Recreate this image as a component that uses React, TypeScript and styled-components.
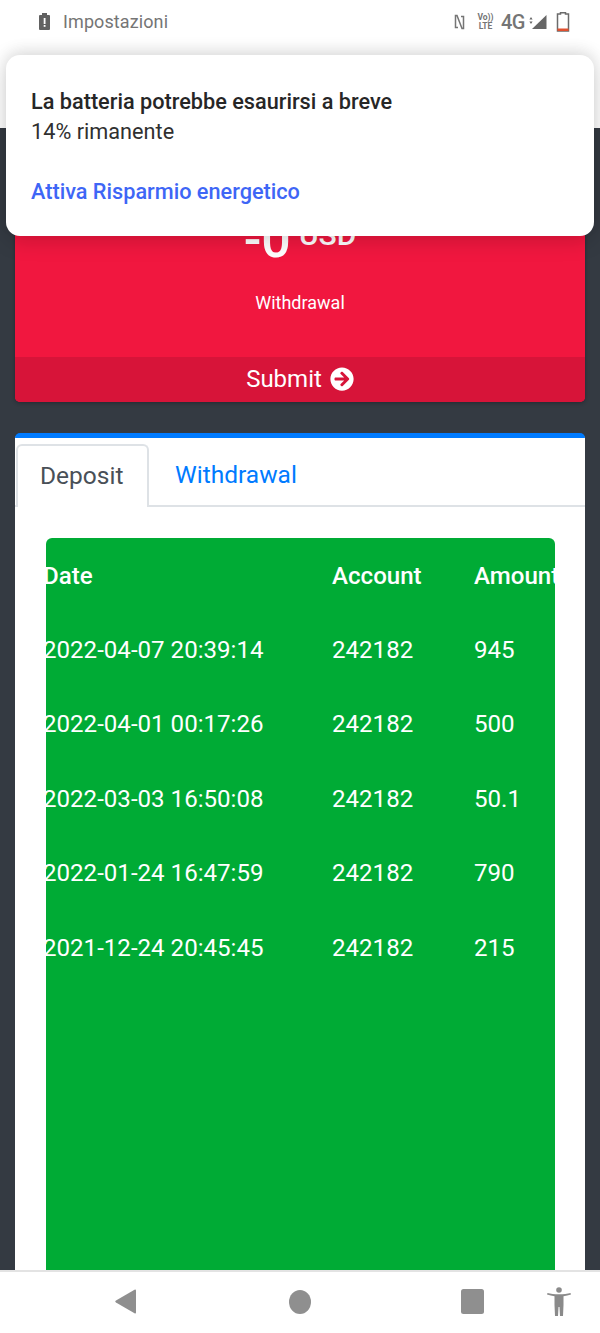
import React from "react";
import styled, { createGlobalStyle } from "styled-components";
import { FaArrowCircleRight } from "react-icons/fa";

const Global = createGlobalStyle`
  html, body { margin: 0; padding: 0; background: #343a42; }
  * { box-sizing: border-box; }
  body { font-family: Roboto, "Liberation Sans", sans-serif; }
`;

const Screen = styled.div`
  position: relative;
  width: 600px;
  height: 1333px;
  display: flex;
  flex-direction: column;
  overflow: hidden;
  background: #343a42;
`;

const Header = styled.header`
  flex: 0 0 128px;
  background: #fff;
`;

const StatusBar = styled.div`
  height: 44px;
  padding: 0 30px 0 39px;
  display: flex;
  align-items: center;
  justify-content: space-between;
  color: #757575;
`;

const StatusLeft = styled.div`
  display: flex;
  align-items: center;
  gap: 13px;
  padding-bottom: 1px;
  font-size: 18px;
  letter-spacing: 0.1px;
`;

const StatusRight = styled.div`
  display: flex;
  align-items: center;
`;

const VoLte = styled.span`
  display: flex;
  flex-direction: column;
  align-items: center;
  margin-left: 12px;
  font-size: 8.5px;
  line-height: 9px;
  font-weight: 700;
  width: 17px;
`;

const FourG = styled.span`
  margin-left: 7px;
  font-size: 20px;
  font-weight: 500;
  letter-spacing: -0.5px;
`;

const Icon = styled.svg<{ $ml?: number }>`
  display: block;
  flex: none;
  margin-left: ${(p) => p.$ml ?? 0}px;
`;

const Notice = styled.section`
  position: absolute;
  left: 6px;
  top: 55px;
  width: 588px;
  height: 181px;
  padding: 32px 25px 0;
  background: #fff;
  border-radius: 14px;
  box-shadow: 0 4px 22px rgba(0, 0, 0, 0.18), 0 -6px 14px rgba(0, 0, 0, 0.06);
`;

const NoticeTitle = styled.div`
  font-size: 21.7px;
  line-height: 30px;
  font-weight: 500;
  color: #262626;
`;

const NoticeText = styled.div`
  font-size: 21.7px;
  line-height: 30px;
  color: #303030;
`;

const NoticeLink = styled.div`
  margin-top: 30px;
  font-size: 21.7px;
  line-height: 30px;
  font-weight: 500;
  color: #3e66f6;
`;

const Main = styled.main`
  flex: 1;
  min-height: 0;
  padding: 22px 15px 0;
  overflow: hidden;
`;

const RedCard = styled.div`
  height: 252px;
  display: flex;
  flex-direction: column;
  border-radius: 5px;
  overflow: hidden;
  background: #f1173f;
  color: #fff;
  box-shadow: 0 1px 4px rgba(0, 0, 0, 0.3);
`;

const RedBody = styled.div`
  flex: 1;
  display: flex;
  flex-direction: column;
  align-items: center;
  padding-top: 62px;
`;

const Amount = styled.div`
  display: flex;
  align-items: flex-start;
  gap: 8px;
  height: 56px;
`;

const AmountValue = styled.span`
  font-size: 52px;
  line-height: 56px;
  font-weight: 500;
`;

const AmountUnit = styled.span`
  margin-top: 7px;
  font-size: 30px;
  line-height: 32px;
  font-weight: 500;
`;

const RedLabel = styled.div`
  margin-top: 23px;
  font-size: 18px;
  line-height: 24px;
`;

const SubmitBar = styled.div`
  flex: 0 0 45px;
  display: flex;
  align-items: center;
  justify-content: center;
  gap: 8px;
  padding-bottom: 1px;
  background: #d71439;
  font-size: 24px;
`;

const TableCard = styled.div`
  margin-top: 31px;
  height: 900px;
  background: #fff;
  border-top: 5px solid #007bff;
  border-radius: 5px 5px 0 0;
  padding-top: 6px;
`;

const Tabs = styled.nav`
  display: flex;
  height: 63px;
  border-bottom: 2px solid #dee2e6;
`;

const ActiveTab = styled.div`
  width: 133px;
  height: 63px;
  margin-left: 1px;
  padding: 0 0 3px 22px;
  display: flex;
  align-items: center;
  background: #fff;
  border: 2px solid #dee2e6;
  border-bottom: none;
  border-radius: 6px 6px 0 0;
  color: #495057;
  font-size: 24.5px;
`;

const Tab = styled.div`
  margin-left: 26px;
  display: flex;
  align-items: center;
  color: #007bff;
  font-size: 24.5px;
`;

const TablePane = styled.div`
  margin: 31px 30px 0 31px;
  height: 800px;
  padding-top: 0.5px;
  border-radius: 6px 6px 0 0;
  background: #00ab35;
  color: #fff;
  overflow: hidden;
`;

const Row = styled.div`
  display: grid;
  grid-template-columns: 289px 142px 120px;
  height: 74.4px;
  margin-left: -3px;
  align-items: center;
  font-size: 24.1px;
  white-space: nowrap;
  &:first-child { font-weight: 500; }
`;

const BottomNav = styled.footer`
  flex: 0 0 63px;
  padding: 0 0 2px 115px;
  display: flex;
  align-items: center;
  background: #fff;
  border-top: 2px solid #e3e3e3;
  position: relative;
`;

const rows = [
  ["2022-04-07 20:39:14", "242182", "945"],
  ["2022-04-01 00:17:26", "242182", "500"],
  ["2022-03-03 16:50:08", "242182", "50.1"],
  ["2022-01-24 16:47:59", "242182", "790"],
  ["2021-12-24 20:45:45", "242182", "215"],
];

export default function App() {
  return (
    <Screen>
      <Global />
      <Header>
        <StatusBar>
          <StatusLeft>
            <Icon width="11" height="17" viewBox="0 0 11 17">
              <path d="M3 0h5v2h2a1 1 0 0 1 1 1v13a1 1 0 0 1-1 1H1a1 1 0 0 1-1-1V3a1 1 0 0 1 1-1h2z" fill="#616161" />
              <rect x="4.7" y="5" width="1.8" height="6" fill="#fff" />
              <rect x="4.7" y="12" width="1.8" height="1.8" fill="#fff" />
            </Icon>
            Impostazioni
          </StatusLeft>
          <StatusRight>
            <Icon width="11" height="16" viewBox="0 0 11 16">
              <path d="M4 13.500H1.500V1.500H3L8 14.500H9.500V2.500H7" fill="none" stroke="#757575" strokeWidth="1.500" />
            </Icon>
            <VoLte>
              <span>Vo))</span>
              <span>LTE</span>
            </VoLte>
            <FourG>4G</FourG>
            <Icon $ml={4} width="18" height="16" viewBox="0 0 18 16">
              <path d="M17.500 1v14H3z" fill="#666" />
              <path d="M2 3l1.600 2.400H.4zM2 10L.4 7.600h3.200z" fill="#666" />
            </Icon>
            <Icon $ml={9} width="14" height="20" viewBox="0 0 14 20">
              <path d="M4.500 2V.8h5V2h3v17h-11V2z" fill="#fff" stroke="#6b6b6b" strokeWidth="1.500" />
              <rect x="1.500" y="16.500" width="11" height="2.500" fill="#e0502f" />
            </Icon>
          </StatusRight>
        </StatusBar>
      </Header>
      <Main>
        <RedCard>
          <RedBody>
            <Amount>
              <AmountValue>-0</AmountValue>
              <AmountUnit>USD</AmountUnit>
            </Amount>
            <RedLabel>Withdrawal</RedLabel>
          </RedBody>
          <SubmitBar>
            Submit
            <FaArrowCircleRight size={24} />
          </SubmitBar>
        </RedCard>
        <TableCard>
          <Tabs>
            <ActiveTab>Deposit</ActiveTab>
            <Tab>Withdrawal</Tab>
          </Tabs>
          <TablePane>
            <Row>
              <span>Date</span>
              <span>Account</span>
              <span>Amount</span>
            </Row>
            {rows.map((r) => (
              <Row key={r[0]}>
                <span>{r[0]}</span>
                <span>{r[1]}</span>
                <span>{r[2]}</span>
              </Row>
            ))}
          </TablePane>
        </TableCard>
      </Main>
      <BottomNav>
        <Icon width="22" height="25" viewBox="0 0 22 25">
          <path d="M21 1.500v22a1 1 0 0 1-1.500.8L1 13.500a1.200 1.200 0 0 1 0-2L19.500.7A1 1 0 0 1 21 1.500z" fill="#8f8f8f" />
        </Icon>
        <Icon $ml={152} width="22" height="24" viewBox="0 0 22 24">
          <ellipse cx="11" cy="12" rx="11" ry="12" fill="#8f8f8f" />
        </Icon>
        <Icon $ml={150} width="23" height="25" viewBox="0 0 23 25">
          <rect width="23" height="25" rx="2.500" fill="#8f8f8f" />
        </Icon>
        <Icon $ml={63} width="24" height="29" viewBox="0 0 24 29">
          <circle cx="12" cy="3" r="2.800" fill="#8a8a8a" />
          <path d="M0 7.500l.5-1.600c3 .8 7 1.400 11.500 1.400s8.500-.6 11.500-1.400l.5 1.600c-2.500.9-5 1.500-7.500 1.800V18l-.5 11H13l-.5-9h-1L11 29H8l-.5-11V9.300C5 9 2.500 8.400 0 7.500z" fill="#8a8a8a" />
        </Icon>
      </BottomNav>
      <Notice>
        <NoticeTitle>La batteria potrebbe esaurirsi a breve</NoticeTitle>
        <NoticeText>14% rimanente</NoticeText>
        <NoticeLink>Attiva Risparmio energetico</NoticeLink>
      </Notice>
    </Screen>
  );
}
